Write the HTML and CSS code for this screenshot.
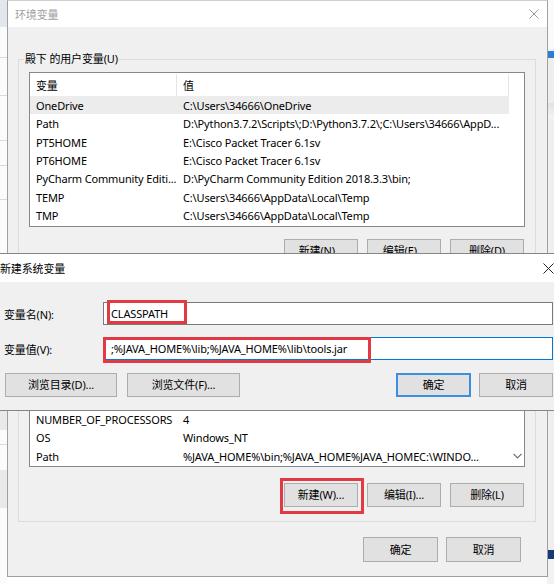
FILE: index.html
```html
<!DOCTYPE html>
<html lang="zh-CN">
<head>
<meta charset="utf-8">
<title>环境变量</title>
<link rel="stylesheet" href="styles.css">
</head>
<body>
<div class="desk">
  <div class="strip-left">
    <div class="sl-top"></div>
    <div class="sl-line l1"></div>
    <div class="sl-line l2"></div>
    <div class="sl-line l3"></div>
    <div class="sl-line l4"></div>
    <div class="sl-line l5"></div>
    <div class="sl-block b1"></div>
    <div class="sl-line l6"></div>
    <div class="sl-block b2"></div>
  </div>
  <div class="strip-right">
    <div class="sr-gap1"></div>
    <div class="sr-blue"></div>
    <div class="sr-gap2"></div>
    <div class="sr-shade"></div>
    <div class="sr-fill"></div>
    <div class="sr-navy"></div>
  </div>

  <section class="win back">
    <header class="tb tb-back">
      <span class="ttl">环境变量</span>
      <svg class="xbtn" width="10" height="10" viewBox="0 0 10 10"><path d="M0.5 0.5L9.5 9.5M9.5 0.5L0.5 9.5" stroke="#9a9a9a" stroke-width="1" fill="none"/></svg>
    </header>
    <div class="back-body">
      <fieldset class="grp grp-user">
        <legend>殿下 的用户变量(U)</legend>
        <div class="list list-user">
          <div class="row head"><span class="c1">变量</span><span class="c2">值</span></div>
          <div class="row sel"><span class="c1">OneDrive</span><span class="c2">C:\Users\34666\OneDrive</span></div>
          <div class="row"><span class="c1">Path</span><span class="c2">D:\Python3.7.2\Scripts\;D:\Python3.7.2\;C:\Users\34666\AppD...</span></div>
          <div class="row"><span class="c1">PT5HOME</span><span class="c2">E:\Cisco Packet Tracer 6.1sv</span></div>
          <div class="row"><span class="c1">PT6HOME</span><span class="c2">E:\Cisco Packet Tracer 6.1sv</span></div>
          <div class="row"><span class="c1">PyCharm Community Editi...</span><span class="c2">D:\PyCharm Community Edition 2018.3.3\bin;</span></div>
          <div class="row"><span class="c1">TEMP</span><span class="c2">C:\Users\34666\AppData\Local\Temp</span></div>
          <div class="row"><span class="c1">TMP</span><span class="c2">C:\Users\34666\AppData\Local\Temp</span></div>
        </div>
        <div class="btns">
          <button class="btn">新建(N)...</button>
          <button class="btn">编辑(E)...</button>
          <button class="btn">删除(D)</button>
        </div>
      </fieldset>
      <fieldset class="grp grp-sys">
        <legend>系统变量(S)</legend>
        <div class="list list-sys">
          <div class="rows">
            <div class="row"><span class="c1">NUMBER_OF_PROCESSORS</span><span class="c2">4</span></div>
            <div class="row"><span class="c1">OS</span><span class="c2">Windows_NT</span></div>
            <div class="row"><span class="c1">Path</span><span class="c2">%JAVA_HOME%\bin;%JAVA_HOME%JAVA_HOMEC:\WINDO...</span></div>
          </div>
          <div class="vscroll">
            <svg width="9" height="6" viewBox="0 0 9 6"><path d="M0.5 0.8L4.5 4.8L8.5 0.8" stroke="#6d6d6d" stroke-width="1.2" fill="none"/></svg>
          </div>
        </div>
        <div class="btns">
          <button class="btn hl">新建(W)...<span class="mark mark-new"></span></button>
          <button class="btn">编辑(I)...</button>
          <button class="btn">删除(L)</button>
        </div>
      </fieldset>
      <div class="btns main-btns">
        <button class="btn">确定</button>
        <button class="btn">取消</button>
      </div>
    </div>
  </section>

  <section class="win front">
    <header class="tb tb-front">
      <span class="ttl">新建系统变量</span>
      <svg class="xbtn" width="11" height="11" viewBox="0 0 11 11"><path d="M0.5 0.5L10.5 10.5M10.5 0.5L0.5 10.5" stroke="#222" stroke-width="1" fill="none"/></svg>
    </header>
    <div class="front-body">
      <label class="lbl">变量名(N):</label>
      <div class="field">CLASSPATH<span class="mark mark-name"></span></div>
      <label class="lbl">变量值(V):</label>
      <div class="field focus">;%JAVA_HOME%\lib;%JAVA_HOME%\lib\tools.jar<span class="mark mark-val"></span></div>
      <div class="front-btns">
        <div class="fb-left">
          <button class="btn wide">浏览目录(D)...</button>
          <button class="btn wide2">浏览文件(F)...</button>
        </div>
        <div class="fb-right">
          <button class="btn def">确定</button>
          <button class="btn">取消</button>
        </div>
      </div>
    </div>
  </section>
</div>
</body>
</html>
```

FILE: styles.css
```css
* { box-sizing: border-box; }

body {
  margin: 0;
  width: 554px;
  height: 584px;
  overflow: hidden;
  background: #ffffff;
  font-family: "Segoe UI", "Noto Sans", "Noto Sans CJK SC", sans-serif;
  font-size: 11px;
  letter-spacing: -0.15px;
  color: #000;
}

.desk {
  position: relative;
  width: 554px;
  height: 584px;
  overflow: hidden;
}

/* desktop remnants */
.strip-left {
  position: absolute;
  left: 0;
  top: 0;
  width: 7px;
  height: 584px;
  background: #fbfbfb;
  display: flex;
  flex-direction: column;
}
.sl-top { height: 27px; background: #e2e7ee; }
.sl-line { height: 1px; background: #dadada; }
.sl-line.l1 { margin-top: 30px; }
.sl-line.l2 { margin-top: 37px; }
.sl-line.l3 { margin-top: 44px; }
.sl-line.l4 { margin-top: 24px; }
.sl-line.l5 { margin-top: 33px; }
.sl-block { background: #e9e9e9; }
.sl-block.b1 { margin-top: 190px; height: 40px; }
.sl-line.l6 { margin-top: 14px; }
.sl-block.b2 { margin-top: 25px; height: 38px; }

.strip-right {
  position: absolute;
  left: 547px;
  top: 0;
  width: 7px;
  height: 584px;
  background: #f2f2f2;
  display: flex;
  flex-direction: column;
}
.sr-gap1 { height: 49px; background: #fafafa; }
.sr-blue { height: 9px; background: #2c7fd0; border-top: 2px solid #e8f1fb; }
.sr-gap2 { height: 45px; background: #eeeeee; }
.sr-shade { height: 16px; background: linear-gradient(#e2e2e2, #f5f5f5); }
.sr-fill { height: 431px; background: #efefef; }
.sr-navy { height: 9px; background: #163a78; }

/* windows */
.win {
  position: absolute;
  display: flex;
  flex-direction: column;
  background: #f0f0f0;
}

.tb {
  flex: none;
  background: #fff;
  display: flex;
  align-items: center;
  justify-content: space-between;
}
.xbtn { display: block; }

/* back dialog */
.back {
  left: 7px;
  top: 0;
  width: 541px;
  height: 577px;
  border: 1px solid #a0a0a0;
  border-top-color: #cfcfcf;
}
.tb-back {
  height: 26px;
  padding: 0 8px 0 7px;
  color: #a0a0a0;
}
.back-body {
  flex: 1;
  padding: 0 11px 0 10px;
  display: flex;
  flex-direction: column;
}

.grp {
  margin: 0;
  padding: 0 10px 0 10px;
  border: 1px solid #dcdcdc;
  min-width: 0;
  display: flex;
  flex-direction: column;
}
.grp legend {
  margin-left: -5px;
  padding: 0 1px;
  line-height: 16px;
}
.grp-user { margin-top: 24px; height: 222px; }
.grp-sys { margin-top: 7px; height: 242px; }

.list {
  flex: none;
  width: 496px;
  background: #fff;
  border: 1px solid #828790;
  margin-top: 5px;
  overflow: hidden;
  white-space: nowrap;
}
.list-user { height: 155px; padding-top: 1px; }
.list-sys {
  height: 166px;
  display: flex;
  align-items: flex-end;
  padding-bottom: 1px;
}
.rows { width: 479px; display: flex; flex-direction: column; }

.row {
  width: 479px;
  height: 18.33px;
  line-height: 19.5px;
  display: grid;
  grid-template-columns: 147px 332px;
}
.row .c1, .row .c2 {
  padding-left: 6px;
  overflow: hidden;
  text-overflow: clip;
}
.row.head {
  height: 22px;
  line-height: 24px;
  border-right: 1px solid #e5e5e5;
}
.row.head .c1 { border-right: 1px solid #e5e5e5; }
.row.sel { background: #ececec; }

.vscroll {
  flex: 1;
  height: 18px;
  display: flex;
  align-items: center;
  justify-content: center;
  padding-left: 1px;
}

.btns {
  display: flex;
  justify-content: flex-end;
  gap: 9px;
  margin-right: 1px;
}
.grp-user .btns { margin-top: 12px; }
.grp-sys .btns { margin-top: 16px; }

.btn {
  position: relative;
  width: 74px;
  height: 24px;
  padding: 0;
  background: #e1e1e1;
  border: 1px solid #adadad;
  font-family: "Segoe UI", "Noto Sans", "Noto Sans CJK SC", sans-serif;
  font-size: 11px;
  letter-spacing: -0.15px;
  color: #000;
  line-height: 22px;
  white-space: nowrap;
}

.main-btns {
  margin-top: 15px;
  margin-right: 15px;
  gap: 8px;
}
.main-btns .btn { width: 75px; height: 25px; }

/* red annotation marks */
.mark {
  position: absolute;
  border: 3px solid #e23a44;
  pointer-events: none;
}
.mark-new { left: -5px; top: -6px; width: 84px; height: 36px; }
.mark-name { left: 3px; top: -3px; width: 80px; height: 24px; }
.mark-val { left: -1px; top: -1px; width: 268px; height: 26px; }

/* front dialog */
.front {
  left: -10px;
  top: 253px;
  width: 575px;
  height: 158px;
  border: 1px solid #858585;
}
.tb-front {
  height: 28px;
  padding: 0 10px 0 9px;
  color: #000;
}
.front-body {
  flex: 1;
  padding: 20px 11px 12px 13px;
  display: grid;
  grid-template-columns: 99px 1fr;
  grid-template-rows: 23px 23px 24px;
  row-gap: 12px;
  align-items: center;
}
.front-body .front-btns { margin-top: 2px; }
.lbl { white-space: nowrap; }
.field {
  position: relative;
  height: 23px;
  line-height: 21px;
  background: #fff;
  border: 1px solid #7a7a7a;
  padding-left: 7px;
  white-space: nowrap;
}
.field.focus { border-color: #0078d7; }

.front-btns {
  grid-column: 1 / -1;
  display: flex;
  justify-content: space-between;
}
.fb-left { display: flex; gap: 10px; padding-left: 1px; }
.fb-right { display: flex; gap: 8px; }
.btn.wide { width: 112px; }
.btn.wide2 { width: 113px; }
.btn.def {
  width: 75px;
  border: 2px solid #3c8fdc;
  line-height: 20px;
}
```
